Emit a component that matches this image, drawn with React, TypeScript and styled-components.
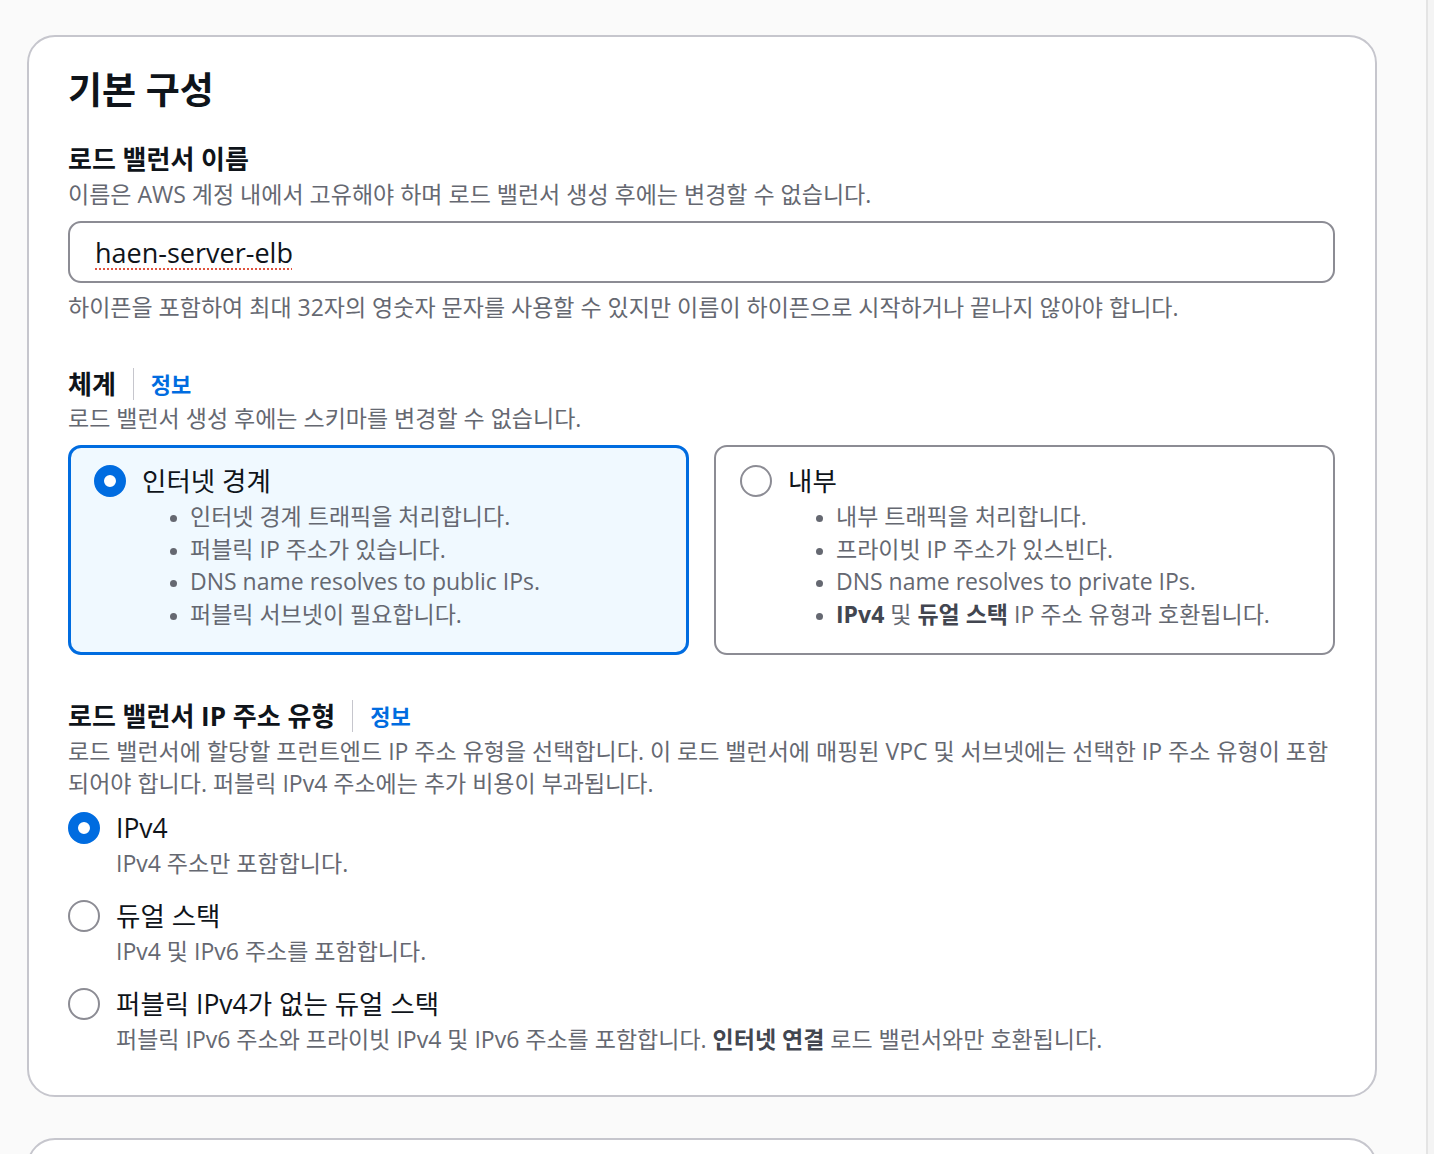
import React from "react";
import styled, { createGlobalStyle } from "styled-components";

const GlobalStyle = createGlobalStyle`
  html, body {
    margin: 0;
    padding: 0;
    background: #fafafa;
    overflow: hidden;
    font-family: "Open Sans", "Noto Sans CJK KR", sans-serif;
    color: #0f141a;
  }
  * { box-sizing: border-box; }
`;

const Page = styled.div`
  display: flex;
  height: 100vh;
`;

const Main = styled.main`
  flex: 1;
  padding: 35px 49px 0 27px;
  min-width: 0;
`;

const ScrollTrack = styled.div`
  width: 8px;
  flex: none;
  border-left: 2px solid #e4e4e4;
  background: #f4f4f4;
`;

const Card = styled.div<{ $stub?: boolean }>`
  background: #ffffff;
  border: 2px solid #c6c6cd;
  border-radius: 28px;
  padding: ${(p) => (p.$stub ? "0" : "31px 40px 40px 39px")};
  height: ${(p) => (p.$stub ? "200px" : "auto")};
  margin-top: ${(p) => (p.$stub ? "41px" : "0")};
`;

const Title = styled.h2`
  margin: 0;
  font-size: 37px;
  line-height: 44px;
  font-weight: 700;
  color: #0f141a;
`;

const Section = styled.section<{ $top: number }>`
  margin-top: ${(p) => p.$top}px;
`;

const LabelRow = styled.div`
  display: flex;
  align-items: center;
  gap: 17px;
`;

const Label = styled.div`
  font-size: 26px;
  line-height: 32px;
  font-weight: 700;
  color: #0f141a;
`;

const Divider = styled.span`
  width: 1px;
  height: 32px;
  background: #c6c6cd;
`;

const InfoLink = styled.a`
  font-size: 22px;
  line-height: 32px;
  font-weight: 700;
  color: #006ce0;
  text-decoration: none;
`;

const Description = styled.div<{ $top?: number }>`
  margin-top: ${(p) => p.$top ?? 3}px;
  font-size: 23px;
  line-height: 32px;
  color: #656871;
`;

const InputBox = styled.div`
  margin-top: 11px;
  height: 62px;
  border: 2px solid #8c8c94;
  border-radius: 13px;
  background: #ffffff;
  display: flex;
  align-items: center;
  padding: 0 25px;
  font-size: 27px;
  color: #0f141a;
`;

const SpellText = styled.span`
  text-decoration: underline dotted #e0533f;
  text-decoration-thickness: 2px;
  text-underline-offset: 6px;
`;

const TileGrid = styled.div`
  margin-top: 11px;
  display: grid;
  grid-template-columns: 1fr 1fr;
  gap: 25px;
`;

const Tile = styled.div<{ $selected: boolean }>`
  ${(p) => {
    const b = p.$selected ? 3 : 2;
    return `
      border: ${b}px solid ${p.$selected ? "#006ce0" : "#8c8c94"};
      padding: ${18 - b}px ${26 - b}px ${25 - b}px ${26 - b}px;
    `;
  }}
  background: ${(p) => (p.$selected ? "#f0f9ff" : "#ffffff")};
  border-radius: 13px;
`;

const TileHeader = styled.div`
  display: flex;
  align-items: center;
  gap: 16px;
`;

const Radio = styled.span<{ $checked: boolean }>`
  flex: none;
  display: block;
  width: 32px;
  height: 32px;
  border-radius: 50%;
  background: #ffffff;
  border: ${(p) => (p.$checked ? "10px solid #006ce0" : "2px solid #8c8c94")};
`;

const OptionLabel = styled.div`
  font-size: 26.5px;
  line-height: 36px;
  color: #0f141a;
`;

const BulletList = styled.ul`
  margin: 1px 0 0 48px;
  padding: 0 0 0 48px;
  list-style: disc;
  font-size: 23px;
  line-height: 32.5px;
  color: #656871;

  li::marker {
    font-size: 19px;
  }
`;

const Strong = styled.strong`
  font-weight: 700;
  color: #424650;
`;

const RadioGroup = styled.div`
  margin-top: 11px;
  display: flex;
  flex-direction: column;
  gap: 19px;
`;

const Option = styled.div`
  display: grid;
  grid-template-columns: 32px 1fr;
  column-gap: 16px;
  align-items: start;

  & > ${Radio} {
    margin-top: 2px;
  }
`;

const OptionDesc = styled.div`
  grid-column: 2;
  margin-top: 1px;
  font-size: 23px;
  line-height: 32px;
  color: #656871;
`;

const schemes = [
  {
    title: "인터넷 경계",
    selected: true,
    bullets: [
      <>인터넷 경계 트래픽을 처리합니다.</>,
      <>퍼블릭 IP 주소가 있습니다.</>,
      <>DNS name resolves to public IPs.</>,
      <>퍼블릭 서브넷이 필요합니다.</>,
    ],
  },
  {
    title: "내부",
    selected: false,
    bullets: [
      <>내부 트래픽을 처리합니다.</>,
      <>프라이빗 IP 주소가 있스빈다.</>,
      <>DNS name resolves to private IPs.</>,
      <>
        <Strong>IPv4</Strong> 및 <Strong>듀얼 스택</Strong> IP 주소 유형과 호환됩니다.
      </>,
    ],
  },
];

const ipTypes = [
  { title: "IPv4", checked: true, desc: <>IPv4 주소만 포함합니다.</> },
  { title: "듀얼 스택", checked: false, desc: <>IPv4 및 IPv6 주소를 포함합니다.</> },
  {
    title: "퍼블릭 IPv4가 없는 듀얼 스택",
    checked: false,
    desc: (
      <>
        퍼블릭 IPv6 주소와 프라이빗 IPv4 및 IPv6 주소를 포함합니다. <Strong>인터넷 연결</Strong> 로드
        밸런서와만 호환됩니다.
      </>
    ),
  },
];

export default function App() {
  return (
    <>
      <GlobalStyle />
      <Page>
        <Main>
          <Card>
            <Title>기본 구성</Title>

            <Section $top={31}>
              <Label>로드 밸런서 이름</Label>
              <Description>이름은 AWS 계정 내에서 고유해야 하며 로드 밸런서 생성 후에는 변경할 수 없습니다.</Description>
              <InputBox>
                <SpellText>haen-server-elb</SpellText>
              </InputBox>
              <Description $top={8}>
                하이픈을 포함하여 최대 32자의 영숫자 문자를 사용할 수 있지만 이름이 하이픈으로 시작하거나 끝나지 않아야 합니다.
              </Description>
            </Section>

            <Section $top={45}>
              <LabelRow>
                <Label>체계</Label>
                <Divider />
                <InfoLink href="#">정보</InfoLink>
              </LabelRow>
              <Description $top={2}>로드 밸런서 생성 후에는 스키마를 변경할 수 없습니다.</Description>
              <TileGrid>
                {schemes.map((s) => (
                  <Tile key={s.title} $selected={s.selected}>
                    <TileHeader>
                      <Radio $checked={s.selected} />
                      <OptionLabel>{s.title}</OptionLabel>
                    </TileHeader>
                    <BulletList>
                      {s.bullets.map((b, i) => (
                        <li key={i}>{b}</li>
                      ))}
                    </BulletList>
                  </Tile>
                ))}
              </TileGrid>
            </Section>

            <Section $top={45}>
              <LabelRow>
                <Label>로드 밸런서 IP 주소 유형</Label>
                <Divider />
                <InfoLink href="#">정보</InfoLink>
              </LabelRow>
              <Description>
                로드 밸런서에 할당할 프런트엔드 IP 주소 유형을 선택합니다. 이 로드 밸런서에 매핑된 VPC 및 서브넷에는 선택한 IP 주소 유형이 포함되어야 합니다. 퍼블릭 IPv4 주소에는 추가 비용이 부과됩니다.
              </Description>
              <RadioGroup>
                {ipTypes.map((t) => (
                  <Option key={t.title}>
                    <Radio $checked={t.checked} />
                    <OptionLabel>{t.title}</OptionLabel>
                    <OptionDesc>{t.desc}</OptionDesc>
                  </Option>
                ))}
              </RadioGroup>
            </Section>
          </Card>
          <Card $stub />
        </Main>
        <ScrollTrack />
      </Page>
    </>
  );
}
